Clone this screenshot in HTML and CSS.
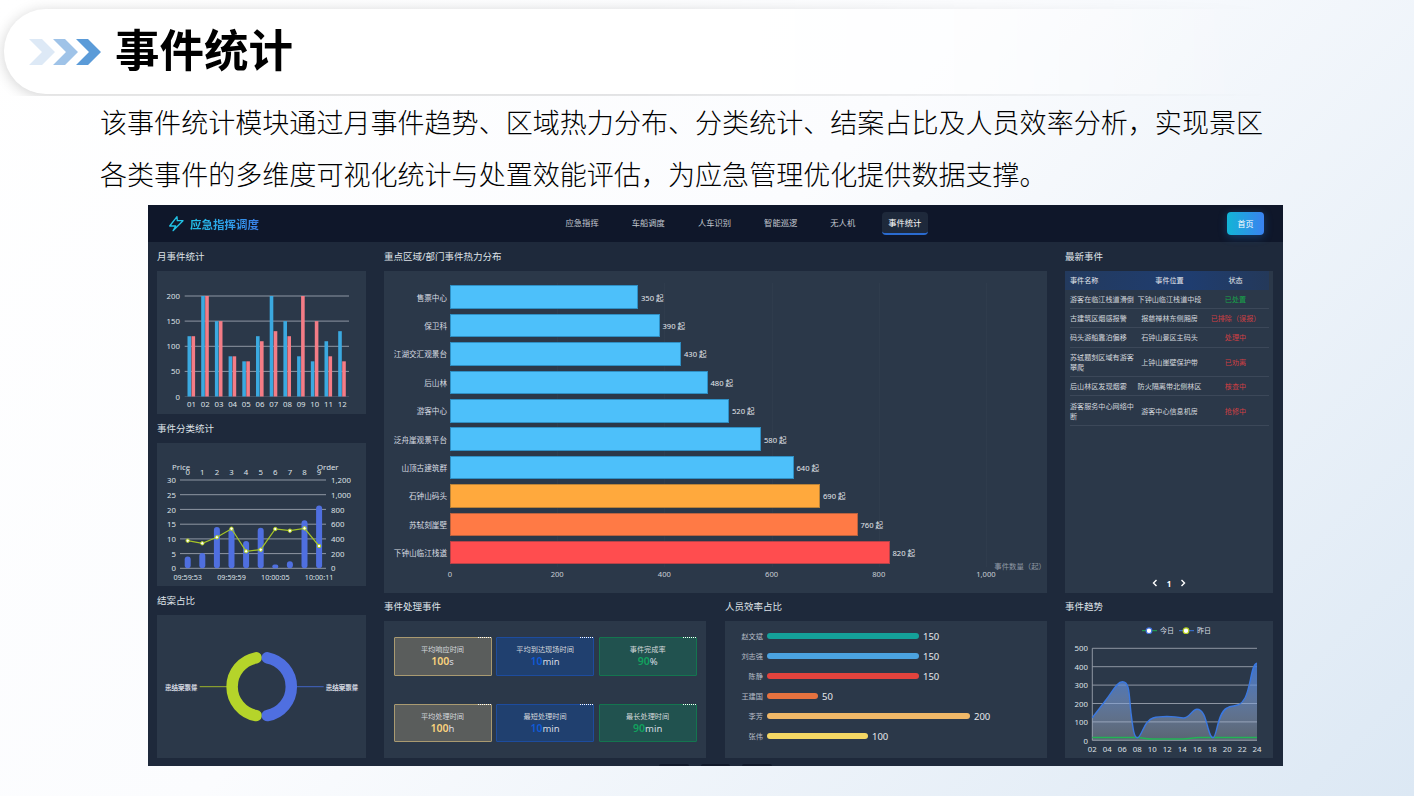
FILE: index.html
```html
<!DOCTYPE html>
<html lang="zh-CN">
<head>
    <meta charset="UTF-8">
    <title>事件统计</title>
    <link rel="stylesheet" href="styles.css">
</head>
<body>
<div class="slide">
    <div class="title-wrap">
        <div class="title-pill">
            <svg class="chevrons" width="72" height="26" viewBox="0 0 72 26">
                <polygon fill="#dde9f6" points="0,0 13,0 26,13 13,26 0,26 13,13"/>
                <polygon fill="#9fc3e8" points="24,0 36,0 49,13 36,26 24,26 37,13"/>
                <polygon fill="#5b9bd8" points="47,0 59,0 72,13 59,26 47,26 60,13"/>
            </svg>
            <h1>事件统计</h1>
        </div>
    </div>
    <p class="intro">该事件统计模块通过月事件趋势、区域热力分布、分类统计、结案占比及人员效率分析，实现景区<br>各类事件的多维度可视化统计与处置效能评估，为应急管理优化提供数据支撑。</p>

    <div class="dash">
        <header class="dash-head">
            <div class="logo">
                <svg width="16" height="16" viewBox="0 0 16 16" fill="none" stroke="#22c3e6" stroke-width="1.3" stroke-linejoin="round">
                    <path d="M8 .7.7 10h6L4 14.7 14 4.7H8.3z"/>
                </svg>
                <span class="logo-text">应急指挥调度</span>
            </div>
            <nav class="nav">
                <a>应急指挥</a>
                <a>车船调度</a>
                <a>人车识别</a>
                <a>智能巡逻</a>
                <a>无人机</a>
                <a class="active">事件统计</a>
            </nav>
            <button class="home-btn">首页</button>
        </header>

        <div class="dash-body">
            <div class="col-left">
                <section>
                    <div class="block-title">月事件统计</div>
                    <div class="panel panel-side">
                        <svg class="chart" width="209" height="143" viewBox="0 0 209 143">
                            <g class="grid">
                                <line x1="27.7" x2="192" y1="25" y2="25"/>
                                <line x1="27.7" x2="192" y1="50.1" y2="50.1"/>
                                <line x1="27.7" x2="192" y1="75.3" y2="75.3"/>
                                <line x1="27.7" x2="192" y1="100.4" y2="100.4"/>
                                <line x1="27.7" x2="192" y1="125.5" y2="125.5" class="base"/>
                            </g>
                            <g transform="translate(0,125.5) scale(1,-0.5025)" class="bars-blue">
                                <rect x="30.5" width="3.6" height="120"/>
                                <rect x="44.2" width="3.6" height="200"/>
                                <rect x="57.9" width="3.6" height="150"/>
                                <rect x="71.6" width="3.6" height="80"/>
                                <rect x="85.3" width="3.6" height="70"/>
                                <rect x="99" width="3.6" height="120"/>
                                <rect x="112.7" width="3.6" height="200"/>
                                <rect x="126.4" width="3.6" height="150"/>
                                <rect x="140.1" width="3.6" height="80"/>
                                <rect x="153.8" width="3.6" height="70"/>
                                <rect x="167.5" width="3.6" height="110"/>
                                <rect x="181.2" width="3.6" height="130"/>
                            </g>
                            <g transform="translate(0,125.5) scale(1,-0.5025)" class="bars-red">
                                <rect x="34.5" width="3.6" height="120"/>
                                <rect x="48.2" width="3.6" height="200"/>
                                <rect x="61.9" width="3.6" height="150"/>
                                <rect x="75.6" width="3.6" height="80"/>
                                <rect x="89.3" width="3.6" height="70"/>
                                <rect x="103" width="3.6" height="110"/>
                                <rect x="116.7" width="3.6" height="130"/>
                                <rect x="130.4" width="3.6" height="120"/>
                                <rect x="144.1" width="3.6" height="200"/>
                                <rect x="157.8" width="3.6" height="150"/>
                                <rect x="171.5" width="3.6" height="80"/>
                                <rect x="185.2" width="3.6" height="70"/>
                            </g>
                            <g class="tick end">
                                <text x="23" y="28">200</text>
                                <text x="23" y="53">150</text>
                                <text x="23" y="78">100</text>
                                <text x="23" y="103">50</text>
                                <text x="23" y="128.5">0</text>
                            </g>
                            <g class="tick mid">
                                <text x="34.5" y="136">01</text>
                                <text x="48.2" y="136">02</text>
                                <text x="61.9" y="136">03</text>
                                <text x="75.6" y="136">04</text>
                                <text x="89.3" y="136">05</text>
                                <text x="103" y="136">06</text>
                                <text x="116.7" y="136">07</text>
                                <text x="130.4" y="136">08</text>
                                <text x="144.1" y="136">09</text>
                                <text x="157.8" y="136">10</text>
                                <text x="171.5" y="136">11</text>
                                <text x="185.2" y="136">12</text>
                            </g>
                        </svg>
                    </div>
                </section>
                <section>
                    <div class="block-title">事件分类统计</div>
                    <div class="panel panel-side">
                        <svg class="chart" width="209" height="143" viewBox="0 0 209 143">
                            <g class="grid">
                                <line x1="23" x2="169" y1="37" y2="37"/>
                                <line x1="23" x2="169" y1="51.7" y2="51.7"/>
                                <line x1="23" x2="169" y1="66.4" y2="66.4"/>
                                <line x1="23" x2="169" y1="81.2" y2="81.2"/>
                                <line x1="23" x2="169" y1="95.9" y2="95.9"/>
                                <line x1="23" x2="169" y1="110.6" y2="110.6"/>
                                <line x1="23" x2="169" y1="125.3" y2="125.3"/>
                            </g>
                            <g class="bars-indigo">
                                <rect x="27.7" y="113.5" width="6" height="11.8" rx="3"/>
                                <rect x="42.3" y="110" width="6" height="15.3" rx="3"/>
                                <rect x="56.9" y="84.1" width="6" height="41.2" rx="3"/>
                                <rect x="71.5" y="85.6" width="6" height="39.7" rx="3"/>
                                <rect x="86.1" y="97.9" width="6" height="27.4" rx="3"/>
                                <rect x="100.7" y="84.7" width="6" height="40.6" rx="3"/>
                                <rect x="115.3" y="121.5" width="6" height="3.8" rx="2"/>
                                <rect x="129.9" y="118.2" width="6" height="7.1" rx="3"/>
                                <rect x="144.5" y="77.3" width="6" height="48" rx="3"/>
                                <rect x="159.1" y="62.6" width="6" height="62.7" rx="3"/>
                            </g>
                            <polyline class="order-line" points="30.7,97.7 45.3,100.3 59.9,94.3 74.5,85.7 89.1,108.3 103.7,106.7 118.3,86 132.9,87.7 147.5,85.3 162.1,103"/>
                            <g class="order-dots">
                                <circle cx="30.7" cy="97.7" r="1.7"/>
                                <circle cx="45.3" cy="100.3" r="1.7"/>
                                <circle cx="59.9" cy="94.3" r="1.7"/>
                                <circle cx="74.5" cy="85.7" r="1.7"/>
                                <circle cx="89.1" cy="108.3" r="1.7"/>
                                <circle cx="103.7" cy="106.7" r="1.7"/>
                                <circle cx="118.3" cy="86" r="1.7"/>
                                <circle cx="132.9" cy="87.7" r="1.7"/>
                                <circle cx="147.5" cy="85.3" r="1.7"/>
                                <circle cx="162.1" cy="103" r="1.7"/>
                            </g>
                            <g class="tick">
                                <text x="15" y="27">Price</text>
                                <text x="160" y="27">Order</text>
                            </g>
                            <g class="tick mid">
                                <text x="30.7" y="32">0</text>
                                <text x="45.3" y="32">1</text>
                                <text x="59.9" y="32">2</text>
                                <text x="74.5" y="32">3</text>
                                <text x="89.1" y="32">4</text>
                                <text x="103.7" y="32">5</text>
                                <text x="118.3" y="32">6</text>
                                <text x="132.9" y="32">7</text>
                                <text x="147.5" y="32">8</text>
                                <text x="162.1" y="32">9</text>
                            </g>
                            <g class="tick mid time">
                                <text x="30.7" y="136.5">09:59:53</text>
                                <text x="74.5" y="136.5">09:59:59</text>
                                <text x="118.3" y="136.5">10:00:05</text>
                                <text x="162.1" y="136.5">10:00:11</text>
                            </g>
                            <g class="tick end">
                                <text x="19" y="40">30</text>
                                <text x="19" y="55">25</text>
                                <text x="19" y="69.5">20</text>
                                <text x="19" y="84">15</text>
                                <text x="19" y="99">10</text>
                                <text x="19" y="113.5">5</text>
                                <text x="19" y="128">0</text>
                            </g>
                            <g class="tick">
                                <text x="174" y="40">1,200</text>
                                <text x="174" y="55">1,000</text>
                                <text x="174" y="69.5">800</text>
                                <text x="174" y="84">600</text>
                                <text x="174" y="99">400</text>
                                <text x="174" y="113.5">200</text>
                                <text x="174" y="128">0</text>
                            </g>
                        </svg>
                    </div>
                </section>
                <section>
                    <div class="block-title">结案占比</div>
                    <div class="panel panel-side">
                        <svg class="chart" width="209" height="143" viewBox="0 0 209 143">
                            <line x1="42.7" x2="70" y1="71.7" y2="71.7" stroke="#9db52a"/>
                            <line x1="139" x2="166.7" y1="71.7" y2="71.7" stroke="#4264c4"/>
                            <path class="arc arc-green" d="M99.1 42.8A29.4 29.4 0 0 0 99.1 100.6"/>
                            <path class="arc arc-blue" d="M110.3 42.8A29.4 29.4 0 0 1 110.3 100.6"/>
                            <g class="tick-sm end">
                                <text x="40.5" y="74.5">未结案数量</text>
                                <text x="40.5" y="74.5">已结案事件</text>
                            </g>
                            <g class="tick-sm">
                                <text x="168.7" y="74.5">已结案数量</text>
                                <text x="168.7" y="74.5">未结案事件</text>
                            </g>
                        </svg>
                    </div>
                </section>
            </div>

            <div class="col-mid">
                <section>
                    <div class="block-title">重点区域/部门事件热力分布</div>
                    <div class="panel panel-heat">
                        <div class="heat-rows">
                            <div class="heat-row"><span class="heat-name">售票中心</span><i class="heat-bar" style="width:188px"></i><span class="heat-val">350 起</span></div>
                            <div class="heat-row"><span class="heat-name">保卫科</span><i class="heat-bar" style="width:209.5px"></i><span class="heat-val">390 起</span></div>
                            <div class="heat-row"><span class="heat-name">江湖交汇观景台</span><i class="heat-bar" style="width:231px"></i><span class="heat-val">430 起</span></div>
                            <div class="heat-row"><span class="heat-name">后山林</span><i class="heat-bar" style="width:257.5px"></i><span class="heat-val">480 起</span></div>
                            <div class="heat-row"><span class="heat-name">游客中心</span><i class="heat-bar" style="width:279px"></i><span class="heat-val">520 起</span></div>
                            <div class="heat-row"><span class="heat-name">泛舟崖观景平台</span><i class="heat-bar" style="width:311px"></i><span class="heat-val">580 起</span></div>
                            <div class="heat-row"><span class="heat-name">山顶古建筑群</span><i class="heat-bar" style="width:343.5px"></i><span class="heat-val">640 起</span></div>
                            <div class="heat-row"><span class="heat-name">石钟山码头</span><i class="heat-bar warm" style="width:370px"></i><span class="heat-val">690 起</span></div>
                            <div class="heat-row"><span class="heat-name">苏轼刻崖壁</span><i class="heat-bar hot" style="width:407.5px"></i><span class="heat-val">760 起</span></div>
                            <div class="heat-row"><span class="heat-name">下钟山临江栈道</span><i class="heat-bar top" style="width:439.5px"></i><span class="heat-val">820 起</span></div>
                        </div>
                        <div class="heat-axis">
                            <span>0</span><span>200</span><span>400</span><span>600</span><span>800</span><span>1,000</span>
                        </div>
                        <div class="heat-unit">事件数量（起）</div>
                    </div>
                </section>
                <div class="mid-lower">
                    <section>
                        <div class="block-title tight">事件处理事件</div>
                        <div class="panel panel-low stat-grid">
                            <div class="stat sand"><div class="stat-name">平均响应时间</div><div class="stat-val"><b>100</b>s</div></div>
                            <div class="stat navy"><div class="stat-name">平均到达现场时间</div><div class="stat-val"><b>10</b>min</div></div>
                            <div class="stat teal"><div class="stat-name">事件完成率</div><div class="stat-val"><b>90</b>%</div></div>
                            <div class="stat sand"><div class="stat-name">平均处理时间</div><div class="stat-val"><b>100</b>h</div></div>
                            <div class="stat navy"><div class="stat-name">最短处理时间</div><div class="stat-val"><b>10</b>min</div></div>
                            <div class="stat teal"><div class="stat-name">最长处理时间</div><div class="stat-val"><b>90</b>min</div></div>
                        </div>
                    </section>
                    <section>
                        <div class="block-title tight">人员效率占比</div>
                        <div class="panel panel-low people">
                            <div class="person"><span class="person-name">赵文斌</span><i class="person-bar" style="width:152px;background:#14a19a"></i><span class="person-val">150</span></div>
                            <div class="person"><span class="person-name">刘志强</span><i class="person-bar" style="width:152px;background:#4ba3e0"></i><span class="person-val">150</span></div>
                            <div class="person"><span class="person-name">陈静</span><i class="person-bar" style="width:152px;background:#e2433d"></i><span class="person-val">150</span></div>
                            <div class="person"><span class="person-name">王建国</span><i class="person-bar" style="width:51px;background:#e6723f"></i><span class="person-val">50</span></div>
                            <div class="person"><span class="person-name">李芳</span><i class="person-bar" style="width:203px;background:#f0b868"></i><span class="person-val">200</span></div>
                            <div class="person"><span class="person-name">张伟</span><i class="person-bar" style="width:101px;background:#f4d764"></i><span class="person-val">100</span></div>
                        </div>
                    </section>
                </div>
            </div>

            <div class="col-right">
                <section>
                    <div class="block-title">最新事件</div>
                    <div class="panel panel-table">
                        <div class="tb-head">
                            <span>事件名称</span><span>事件位置</span><span>状态</span>
                        </div>
                        <div class="tb-row"><span>游客在临江栈道滑倒</span><span>下钟山临江栈道中段</span><span class="ok">已处置</span></div>
                        <div class="tb-row"><span>古建筑区烟感报警</span><span>报慈禅林东侧厢房</span><span class="bad">已排除（误报）</span></div>
                        <div class="tb-row"><span>码头游船靠泊偏移</span><span>石钟山景区主码头</span><span class="bad">处理中</span></div>
                        <div class="tb-row"><span>苏轼题刻区域有游客攀爬</span><span>上钟山崖壁保护带</span><span class="bad">已劝离</span></div>
                        <div class="tb-row"><span>后山林区发现烟雾</span><span>防火隔离带北侧林区</span><span class="bad">核查中</span></div>
                        <div class="tb-row"><span>游客服务中心网络中断</span><span>游客中心信息机房</span><span class="bad">抢修中</span></div>
                        <div class="pager">
                            <svg width="6" height="8" viewBox="0 0 6 8" fill="none" stroke="#fff" stroke-width="1.4"><path d="M4.5 1 1.5 4l3 3"/></svg>
                            <b>1</b>
                            <svg width="6" height="8" viewBox="0 0 6 8" fill="none" stroke="#fff" stroke-width="1.4"><path d="M1.5 1l3 3-3 3"/></svg>
                        </div>
                    </div>
                </section>
                <section>
                    <div class="block-title tight">事件趋势</div>
                    <div class="panel panel-low">
                        <svg class="chart" width="208" height="137" viewBox="0 0 208 137">
                            <defs>
                                <linearGradient id="areaFill" x1="0" x2="0" y1="0" y2="1">
                                    <stop offset="0" stop-color="#3f7be0" stop-opacity=".85"/>
                                    <stop offset="1" stop-color="#c3cad6" stop-opacity=".3"/>
                                </linearGradient>
                            </defs>
                            <line x1="77" x2="92" y1="9.7" y2="9.7" stroke="#1fa84f"/>
                            <circle cx="84" cy="9.7" r="2.8" fill="#fff" stroke="#3f6fe0" stroke-width="1.2"/>
                            <text class="legend" x="95" y="12">今日</text>
                            <line x1="114" x2="129" y1="9.7" y2="9.7" stroke="#3b78e0"/>
                            <circle cx="121" cy="9.7" r="2.8" fill="#fff" stroke="#b4d01e" stroke-width="1.2"/>
                            <text class="legend" x="132" y="12">昨日</text>
                            <g class="grid">
                                <line x1="27.3" x2="192" y1="27.3" y2="27.3"/>
                                <line x1="27.3" x2="192" y1="45.7" y2="45.7"/>
                                <line x1="27.3" x2="192" y1="64.1" y2="64.1"/>
                                <line x1="27.3" x2="192" y1="82.5" y2="82.5"/>
                                <line x1="27.3" x2="192" y1="100.9" y2="100.9"/>
                                <line x1="27.3" x2="192" y1="119.3" y2="119.3"/>
                                <line x1="27.3" x2="27.3" y1="27.3" y2="119.3"/>
                            </g>
                            <path fill="url(#areaFill)" d="M27.3 96.7L41.7 78C48 70 52 60.7 57.5 60.7C65 60.7 64 75 66 92C68 108 69 116.7 72.3 116.7C77 116.7 78 100 88 97C95 95 108 95 118 97C124 98 127 88.3 132 88.3C139 88.3 141 100 143 107C145 114 146 116.7 148 116.7C152 116.7 152 92 162 87C168 83 174 88 180 77C186 66 186 43 192 42.3V119.3H27.3z"/>
                            <path class="trend-green" d="M27.3 116.5H72C78 116.5 80 118 88 118H118C124 118 128 116.5 134 116.5H192"/>
                            <path class="trend-blue" d="M27.3 96.7L41.7 78C48 70 52 60.7 57.5 60.7C65 60.7 64 75 66 92C68 108 69 116.7 72.3 116.7C77 116.7 78 100 88 97C95 95 108 95 118 97C124 98 127 88.3 132 88.3C139 88.3 141 100 143 107C145 114 146 116.7 148 116.7C152 116.7 152 92 162 87C168 83 174 88 180 77C186 66 186 43 192 42.3"/>
                            <g class="tick end">
                                <text x="23" y="30">500</text>
                                <text x="23" y="48.5">400</text>
                                <text x="23" y="67">300</text>
                                <text x="23" y="85.5">200</text>
                                <text x="23" y="104">100</text>
                                <text x="23" y="122.5">0</text>
                            </g>
                            <g class="tick mid">
                                <text x="27.3" y="131">02</text>
                                <text x="42.3" y="131">04</text>
                                <text x="57.3" y="131">06</text>
                                <text x="72.3" y="131">08</text>
                                <text x="87.3" y="131">10</text>
                                <text x="102.3" y="131">12</text>
                                <text x="117.3" y="131">14</text>
                                <text x="132.3" y="131">16</text>
                                <text x="147.3" y="131">18</text>
                                <text x="162.3" y="131">20</text>
                                <text x="177.3" y="131">22</text>
                                <text x="192" y="131">24</text>
                            </g>
                        </svg>
                    </div>
                </section>
            </div>
        </div>

        <div class="float-tabs"><i></i><i></i><i></i></div>
    </div>
</div>
</body>
</html>
```
FILE: styles.css
```css
* {
    box-sizing: border-box;
}

body {
    margin: 0;
    overflow: hidden;
    font-family: "Noto Sans", "Noto Sans CJK SC", sans-serif;
}

.slide {
    width: 1414px;
    height: 796px;
    background: linear-gradient(135deg, #ffffff 0%, #fbfcfe 45%, #dce8f4 100%);
}

/* title bar */
.title-wrap {
    height: 96px;
    padding: 9px 0 0 4px;
    -webkit-mask-image: linear-gradient(90deg, #000 45%, transparent 90%);
    mask-image: linear-gradient(90deg, #000 45%, transparent 90%);
}

.title-pill {
    display: flex;
    align-items: center;
    gap: 14px;
    height: 85px;
    margin-right: -60px;
    padding-left: 25px;
    background: #fff;
    border-radius: 42px 0 0 42px;
    box-shadow: 0 2px 14px rgba(0, 0, 0, 0.18);
}

.title-pill h1 {
    margin: -8px 0 0 0;
    font: 700 44.5px/60px "Noto Sans CJK SC", sans-serif;
    color: #000;
}

.intro {
    margin: 0 0 0 100px;
    height: 109px;
    font: 300 27.05px/52px "Noto Sans CJK SC", sans-serif;
    color: #000;
    white-space: nowrap;
}

/* dashboard */
.dash {
    position: relative;
    width: 1135px;
    height: 561px;
    margin-left: 148px;
    background: #1e293b;
    color: #d8dce2;
}

.dash-head {
    display: flex;
    align-items: center;
    height: 37px;
    padding: 0 19px 0 21px;
    background: #0f172a;
}

.logo {
    display: flex;
    align-items: center;
    gap: 5px;
    width: 390px;
}

.logo-text {
    font: 700 11.5px/16px "Noto Sans CJK SC", sans-serif;
    background: linear-gradient(90deg, #22c3e6, #3a80ea);
    -webkit-background-clip: text;
    background-clip: text;
    color: transparent;
}

.nav {
    display: flex;
    gap: 20px;
}

.nav a {
    display: block;
    height: 23px;
    padding: 0 6.5px;
    font-size: 8.3px;
    line-height: 21px;
    color: #c3c8d0;
    border-bottom: 2px solid transparent;
    border-radius: 4px;
}

.nav a.active {
    background: #1e293b;
    color: #fff;
    border-bottom-color: #2a6bd0;
}

.home-btn {
    width: 37px;
    height: 23px;
    margin: -1px 0 0 auto;
    padding: 0;
    border: none;
    border-radius: 4px;
    font: 400 8px "Noto Sans", "Noto Sans CJK SC", sans-serif;
    color: #fff;
    background: linear-gradient(90deg, #12b5d6, #3a82f0);
    box-shadow: 0 2px 8px rgba(34, 130, 220, 0.35);
}

.dash-body {
    display: grid;
    grid-template-columns: 209px 663px 208px;
    gap: 18px;
    padding-left: 9px;
}

.block-title {
    height: 29px;
    padding-top: 8px;
    font-size: 9.5px;
    line-height: 14px;
    color: #dfe3e8;
}

.block-title.tight {
    height: 28px;
    padding-top: 7px;
}

.panel {
    background: #2b3849;
}

.panel-side {
    height: 143px;
}

.panel-low {
    height: 137px;
}

.chart {
    display: block;
}

/* svg chart bits */
.grid line {
    stroke: #9aa2ae;
    stroke-width: 0.9;
}

.grid .base {
    stroke: #4a5566;
}

.bars-blue {
    fill: #3ba9e0;
}

.bars-red {
    fill: #f47c86;
}

.bars-indigo {
    fill: #4f6fe0;
}

.tick text {
    fill: #dfe2e7;
    font-size: 7.8px;
}

.tick.time text {
    font-size: 7.2px;
}

.tick-sm text {
    fill: #d8dce2;
    font-size: 6.5px;
}

.legend {
    fill: #d8dce2;
    font-size: 7px;
}

.end text {
    text-anchor: end;
}

.mid text {
    text-anchor: middle;
}

.order-line {
    fill: none;
    stroke: #a5c427;
    stroke-width: 1.2;
}

.order-dots circle {
    fill: #fff;
    stroke: #b4d01e;
    stroke-width: 1;
}

.arc {
    fill: none;
    stroke-width: 11.5;
    stroke-linecap: round;
}

.arc-green {
    stroke: #b5d42a;
}

.arc-blue {
    stroke: #4f6fe0;
}

.trend-blue {
    fill: none;
    stroke: #3b78e0;
    stroke-width: 1.4;
}

.trend-green {
    fill: none;
    stroke: #22b455;
    stroke-width: 1.5;
}

/* heat chart */
.panel-heat {
    position: relative;
    height: 322px;
    padding-top: 12px;
}

.heat-rows {
    position: relative;
}

.heat-rows::before {
    content: "";
    position: absolute;
    top: 0;
    bottom: 0;
    left: 66px;
    width: 538px;
    background: repeating-linear-gradient(90deg, rgba(255, 255, 255, 0.02) 0 1px, transparent 1px 107.2px);
}

.heat-row {
    position: relative;
    display: flex;
    align-items: center;
    height: 28.4px;
}

.heat-name {
    width: 63px;
    margin-right: 3px;
    font-size: 7.6px;
    text-align: right;
    white-space: nowrap;
}

.heat-bar {
    display: block;
    height: 23.5px;
    background: #4dc0fa;
    border: 1px solid #2f8fc4;
}

.heat-bar.warm {
    background: #ffa93d;
    border-color: #b98238;
}

.heat-bar.hot {
    background: #ff7a45;
    border-color: #b9623f;
}

.heat-bar.top {
    background: #ff4d4f;
    border-color: #b84248;
}

.heat-val {
    margin-left: 3px;
    font-size: 7.6px;
    color: #e4e7eb;
    white-space: nowrap;
}

.heat-axis {
    display: flex;
    justify-content: space-between;
    width: 576px;
    margin: 1px 0 0 46px;
    font-size: 7.6px;
    line-height: 12px;
    color: #c9ced5;
}

.heat-axis span {
    width: 40px;
    text-align: center;
}

.heat-unit {
    position: absolute;
    right: 1px;
    top: 290px;
    font-size: 7.4px;
    line-height: 11px;
    color: #8f98a5;
}

/* lower middle */
.mid-lower {
    display: grid;
    grid-template-columns: 322px 322px;
    gap: 19px;
}

.stat-grid {
    display: grid;
    grid-template-columns: repeat(3, 98px);
    grid-auto-rows: 38.5px;
    column-gap: 4.6px;
    row-gap: 28px;
    padding: 16px 0 0 9.5px;
}

.stat {
    position: relative;
    padding-top: 6px;
    border: 1px solid;
    border-radius: 1px;
    text-align: center;
}

.stat::after {
    content: "";
    position: absolute;
    top: -1px;
    right: 0;
    width: 13px;
    border-top: 1px dotted #fff;
}

.stat-name {
    font-size: 7.2px;
    line-height: 11px;
    color: #d5d8dc;
}

.stat-val {
    font-size: 9.5px;
    line-height: 13px;
    color: #d8dce2;
}

.stat-val b {
    font-size: 10.5px;
    font-weight: 600;
}

.sand {
    background: #5a5d5c;
    border-color: #a99a71;
}

.sand b {
    color: #f9d27c;
}

.navy {
    background: #20406f;
    border-color: #1d4c9e;
}

.navy b {
    color: #0f5ad8;
}

.teal {
    background: #21524f;
    border-color: #14754f;
}

.teal b {
    color: #12a15e;
}

.people {
    padding: 5px 0 0 0;
}

.person {
    display: flex;
    align-items: center;
    height: 20px;
}

.person-name {
    width: 38px;
    margin-right: 4px;
    font-size: 7.2px;
    color: #b9bfc8;
    text-align: right;
}

.person-bar {
    display: block;
    height: 6.3px;
    border-radius: 3px;
}

.person-val {
    margin-left: 4px;
    font-size: 9.5px;
    color: #e6e9ed;
}

/* event table */
.panel-table {
    display: flex;
    flex-direction: column;
    height: 322px;
    padding-right: 4px;
}

.tb-head,
.tb-row {
    display: grid;
    grid-template-columns: 67px 65px 67px;
    font-size: 7.1px;
}

.tb-head {
    align-items: center;
    height: 18.5px;
    padding-left: 5px;
    background: linear-gradient(90deg, #233a5e, #1f3d70 60%, #24395a);
    color: #e6e9ed;
}

.tb-row {
    align-items: center;
    margin-left: 5px;
    padding: 4.2px 0;
    line-height: 10px;
    border-bottom: 1px solid #3c4859;
    color: #d3d7dd;
}

.tb-head span:nth-child(n+2),
.tb-row span:nth-child(n+2) {
    text-align: center;
    white-space: nowrap;
}

.ok {
    color: #18a34a;
}

.bad {
    color: #cf3f43;
}

.pager {
    display: flex;
    justify-content: center;
    align-items: center;
    gap: 8px;
    height: 20px;
    margin-top: auto;
    margin-left: 4px;
    font-size: 8px;
    color: #fff;
}

.pager b {
    width: 6px;
    text-align: center;
}

/* small dark tabs peeking out at the bottom edge */
.float-tabs {
    position: absolute;
    left: 511px;
    bottom: 0;
    display: flex;
    gap: 12px;
}

.float-tabs i {
    display: block;
    width: 29.5px;
    height: 2px;
    background: #11192a;
    border-radius: 2px 2px 0 0;
}
```
